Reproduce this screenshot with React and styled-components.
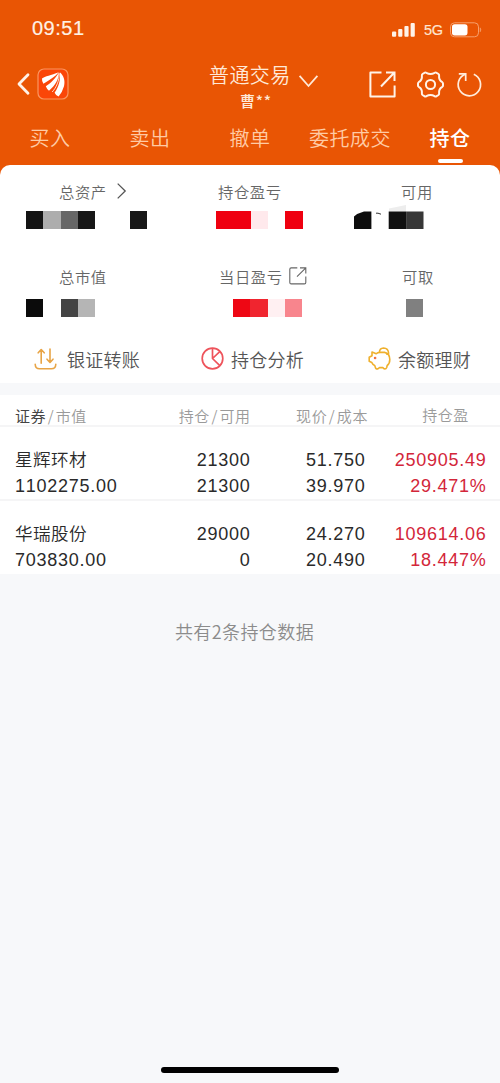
import React from 'react';
import styled, { createGlobalStyle } from 'styled-components';

const Global = createGlobalStyle`
  * { box-sizing: border-box; }
  body {
    margin: 0;
    background: #f7f8fa;
    font-family: "Liberation Sans", "Noto Sans CJK SC", sans-serif;
    font-kerning: none;
  }
  svg { display: block; flex: none; overflow: visible; }
`;

const Screen = styled.div`
  width: 500px;
  height: 1083px;
  display: flex;
  flex-direction: column;
  overflow: hidden;
  background: #f7f8fa;
`;

const Header = styled.header`
  height: 177px;
  flex: none;
  background: #e95504;
  color: #fff;
`;

const StatusBar = styled.div`
  height: 56px;
  padding: 0 18px 0 32px;
  display: flex;
  align-items: center;
  justify-content: space-between;
`;

const Clock = styled.span`
  font-size: 20px;
  line-height: 24px;
  letter-spacing: 0.5px;
  color: #fff1e4;
  -webkit-text-stroke: 0.2px #fff1e4;
`;

const StatusIcons = styled.div`
  display: flex;
  align-items: center;
  height: 24px;
  padding-top: 4px;
`;

const Network = styled.span`
  margin: 0 7px 0 9px;
  font-size: 14.5px;
  line-height: 18px;
  width: 19px;
  letter-spacing: -0.2px;
  color: #ffe5d0;
  -webkit-text-stroke: 0.2px #ffe5d0;
`;

const NavBar = styled.div`
  height: 60px;
  padding: 0 18px 0 17px;
  display: grid;
  grid-template-columns: 192px 1fr 113px;
`;

const NavLeft = styled.div`
  display: flex;
  align-items: center;
  gap: 7px;
  padding-bottom: 4px;
`;

const NavTitle = styled.div`
  padding-top: 5px;
`;

const TitleLine = styled.div`
  display: flex;
  align-items: center;
  gap: 8px;
  height: 26px;
  font-size: 20px;
  font-weight: 350;
  letter-spacing: 0.4px;
  white-space: nowrap;
  color: #ffe9d8;
  svg { margin-top: 13px; }
`;

const Account = styled.div`
  padding-left: 31px;
  font-size: 15px;
  line-height: 22px;
  font-weight: 500;
  letter-spacing: 0.8px;
  margin-top: 3px;
  color: #ffe9d8;
  font-family: "Noto Sans CJK SC", sans-serif;
`;

const NavActions = styled.div`
  display: flex;
  align-items: center;
  padding-bottom: 4px;
  svg:nth-child(2) { margin: 0 13px 0 21px; }
`;

const Tabs = styled.nav`
  display: grid;
  grid-template-columns: repeat(5, 100px);
  height: 49px;
`;

const Tab = styled.div`
  display: flex;
  flex-direction: column;
  align-items: center;
  padding-top: 8px;
  font-size: 20px;
  line-height: 30px;
  letter-spacing: 0.5px;
  white-space: nowrap;
  font-weight: ${(p) => (p.$active ? 500 : 350)};
  color: ${(p) => (p.$active ? '#fff' : '#ffcba5')};
  &::after {
    content: "";
    width: 25px;
    height: 4px;
    margin-top: 5px;
    border-radius: 2px;
    background: ${(p) => (p.$active ? '#fff' : 'transparent')};
  }
`;

const Card = styled.section`
  height: 218px;
  margin-top: -12px;
  flex: none;
  background: #fff;
  border-radius: 10px 10px 0 0;
`;

const Stats = styled.div`
  display: grid;
  grid-template-columns: 167px 167px 166px;
  grid-template-rows: 85px 87px;
`;

const Stat = styled.div`
  padding-top: 14px;
`;

const StatLabel = styled.div`
  display: flex;
  align-items: center;
  gap: ${(p) => p.$gap || 0}px;
  height: 24px;
  padding-left: ${(p) => p.$indent}px;
  font-size: 15.3px;
  font-weight: 350;
  letter-spacing: 0.6px;
  color: #666;
`;

const Mosaic = styled.div`
  display: flex;
  height: 17.5px;
  margin-top: ${(p) => p.$top}px;
  margin-left: ${(p) => p.$indent}px;
`;

const Block = styled.span`
  width: 17.33px;
  background: ${(p) => p.$tone || 'transparent'};
`;

const Shortcuts = styled.div`
  display: grid;
  grid-template-columns: 167px 167px 166px;
  height: 42px;
`;

const Shortcut = styled.div`
  display: flex;
  align-items: center;
  gap: ${(p) => p.$gap}px;
  height: 43px;
  padding-left: 34px;
  font-size: 18px;
  font-weight: 350;
  letter-spacing: 0.25px;
  color: #555;
`;

const Table = styled.section`
  margin-top: 12px;
  flex: none;
  background: #fff;
`;

const HeadRow = styled.div`
  display: grid;
  grid-template-columns: 135px 100.6px 117.4px 101px;
  height: 32px;
  padding: 7px 0 0 15px;
  border-bottom: 2px solid #f5f5f6;
  font-size: 15px;
  line-height: 28px;
  font-weight: 350;
  letter-spacing: 0.6px;
  color: #9a9a9a;
  white-space: nowrap;
  overflow: hidden;
`;

const HeadCell = styled.span`
  text-align: ${(p) => (p.$left ? 'left' : 'right')};
`;

const Strong = styled.span`
  color: #444;
  font-weight: 400;
`;

const Slash = styled.span`
  padding: 0 1.5px;
  font-family: "Noto Sans CJK SC", sans-serif;
`;

const HoldingRow = styled.div`
  display: grid;
  grid-template-columns: 135px 100.6px 115px 121px;
  height: ${(p) => p.$height}px;
  padding: 21px 0 0 15px;
  border-bottom: ${(p) => (p.$last ? 'none' : '2px solid #f5f5f6')};
`;

const Cell = styled.div`
  display: flex;
  flex-direction: column;
  align-items: ${(p) => (p.$left ? 'flex-start' : 'flex-end')};
  font-size: 18px;
  line-height: 25.5px;
  letter-spacing: 0.75px;
  white-space: nowrap;
  color: ${(p) => (p.$gain ? '#d3263a' : '#2a2a2a')};
`;

const StockName = styled.span`
  font-size: 17.6px;
  font-weight: 350;
  letter-spacing: 0.4px;
  height: 25.5px;
`;

const Summary = styled.p`
  margin: 43px 0 0;
  text-align: center;
  font-size: 18px;
  line-height: 28px;
  font-weight: 350;
  letter-spacing: 0.4px;
  font-family: "Noto Sans CJK SC", sans-serif;
  padding-right: 11px;
  color: #8b8b8b;
`;

const HomeIndicator = styled.div`
  width: 178px;
  height: 6px;
  margin: auto auto 10px 161px;
  border-radius: 3px;
  background: #000;
`;

const Signal = () => (
  <svg width="23" height="14" viewBox="0 0 23 14" fill="#fff3e8">
    <rect x="0" y="8.5" width="4.2" height="5.3" rx="1" />
    <rect x="6.2" y="6" width="4.2" height="7.8" rx="1" />
    <rect x="12.4" y="3" width="4.2" height="10.8" rx="1" />
    <rect x="18.6" y="0" width="4.2" height="13.8" rx="1" />
  </svg>
);

const Battery = () => (
  <svg width="32" height="16" viewBox="0 0 32 16">
    <rect x="0.5" y="0.8" width="28" height="14" rx="4" fill="none" stroke="#f7a06d" />
    <rect x="2" y="2.2" width="15.5" height="11.2" rx="2.6" fill="#fff" />
    <path d="M30.2 5.8q1.3 2 0 4z" fill="#f7a06d" stroke="#f7a06d" strokeWidth=".6" />
  </svg>
);

const Back = () => (
  <svg width="13" height="22" viewBox="0 0 13 22" fill="none" stroke="#fff3e8" strokeWidth="2.8" strokeLinecap="round" strokeLinejoin="round">
    <path d="M11 1.8 2 11l9 9.2" />
  </svg>
);

const Logo = () => (
  <svg width="32" height="32" viewBox="0 0 32 32">
    <rect x="1" y="1" width="30" height="30" rx="6" fill="#fa4608" stroke="#fb9660" strokeWidth="1.2" />
    <g fill="#fff">
      <path d="M5 10.5C8 8.2 14 7.2 21.8 4.2C18 8.8 12.5 11.8 6.4 15.7Q4.7 13.2 5 10.5Z" />
      <path d="M8.8 18.2C13.5 15.5 18.5 10.5 21.8 4.6C21.8 11.5 18.6 17.2 12 22.8Q9.8 21 8.8 18.2Z" />
      <path d="M22.8 4.2C26.6 7.5 28.4 12 27 18.2Q25.2 24.5 21.6 28.5Q18.6 27.4 17.6 24.8C21.8 18.5 23.8 12 22.8 4.2Z" />
    </g>
    <path d="M22.3 5.2C22.5 12.5 19 20 15.2 24" fill="none" stroke="#fff" strokeWidth=".8" />
  </svg>
);

const ChevronDown = () => (
  <svg width="19" height="12" viewBox="0 0 19 12" fill="none" stroke="#ffe9d8" strokeWidth="1.8">
    <path d="M.6.8 9.5 11 18.4.8" />
  </svg>
);

const ChevronRight = () => (
  <svg width="9" height="16" viewBox="0 0 9 16" fill="none" stroke="#555" strokeWidth="1.3">
    <path d="M.7.6 8.2 8 .7 15.4" />
  </svg>
);

const ShareBox = () => (
  <svg width="27" height="27" viewBox="0 0 27 27" fill="none" stroke="#fff3e8" strokeWidth="2">
    <path d="M12.5 1.5H1.4v24.1h24.2V14.5" strokeLinejoin="round" />
    <path d="M17 1.5h8.5V10M25.2 1.8 12 15.5" />
  </svg>
);

const Gear = () => (
  <svg width="27" height="27" viewBox="0 0 27 27" fill="none" stroke="#fff3e8" strokeWidth="2" strokeLinejoin="round">
    <path d="M7.4 1.8Q8.4 1.1 9.4 1.8Q13.5 4.4 17.6 1.8Q18.6 1.1 19.6 1.8L21.5 3Q22.3 3.6 22.1 4.7Q21.6 9.2 25.3 11.2Q26 11.7 26 12.6V14.4Q26 15.3 25.3 15.8Q21.6 17.8 22.1 22.3Q22.3 23.4 21.5 24L19.6 25.2Q18.6 25.9 17.6 25.2Q13.5 22.6 9.4 25.2Q8.4 25.9 7.4 25.2L5.5 24Q4.7 23.4 4.9 22.3Q5.4 17.8 1.7 15.8Q1 15.3 1 14.4V12.6Q1 11.7 1.7 11.2Q5.4 9.2 4.9 4.7Q4.7 3.6 5.5 3Z" />
    <circle cx="13.5" cy="13.5" r="4.6" />
  </svg>
);

const Refresh = () => (
  <svg width="25" height="25" viewBox="0 0 25 25" fill="none" stroke="#ffecdc" strokeWidth="1.7">
    <path d="M16.8 2.3A11.2 11.2 0 1 1 8.2 2.2" />
    <path d="M1.8 1.8H8.7V9" />
  </svg>
);

const SmallShare = () => (
  <svg width="18" height="18" viewBox="0 0 18 18" fill="none" stroke="#666" strokeWidth="1.1">
    <path d="M8.3.9H2.2Q.8.9.8 2.3v13.2q0 1.4 1.4 1.4h13.2q1.4 0 1.4-1.4V9.5M11 .9h5.8v5.5M16.6 1.1 8 9.6" />
  </svg>
);

const Transfer = () => (
  <svg width="23" height="22" viewBox="0 0 23 22" fill="none" stroke="#e8a445" strokeWidth="1.6" strokeLinecap="round" strokeLinejoin="round">
    <path d="M1.2 16.2Q1.4 20.8 5.5 20.8H17.5Q21.6 20.8 21.8 16.2" />
    <path d="M7.2 15.2V1.7M4.2 4.8 7.2 1.5l3 3.3M16 1v13.2M13 11.2l3 3.3 3-3.3" />
  </svg>
);

const Pie = () => (
  <svg width="23" height="23" viewBox="0 0 23 23" fill="none" stroke="#ee535b" strokeWidth="1.7">
    <circle cx="11.5" cy="11.5" r="10.3" />
    <path d="M11.5 1.2v10.3l7.6 7.3M11.5 11.5l7.5-7.2" strokeLinejoin="round" />
  </svg>
);

const Piggy = () => (
  <svg width="23" height="23" viewBox="0 0 23 23" fill="none" stroke="#efb02d" strokeWidth="1.6" strokeLinejoin="round" strokeLinecap="round">
    <path d="M4 5.1 8.2 6.8Q9.5 5.4 12 5.4H16.5Q21.8 6.5 21.8 12.5Q21.8 16.5 19.2 18.5L18.7 20.5Q18 22.3 16.2 21.8L14.8 20.6H11.5L9.8 21.9Q7.8 22.4 7.4 20.5L6.7 18.4Q4.6 17.6 3.8 15.4L1.2 14.2V10.3L4 8.8Z" />
    <path d="M11.4 5.2Q11.6 1.2 15.5 1Q20.3 1.1 20.6 6.2Q20.2 7.8 18.8 7.1" />
    <circle cx="7.1" cy="11" r=".5" stroke="#f06b35" />
  </svg>
);

const AvailableMosaic = () => (
  <svg width="70" height="24" viewBox="0 0 70 24">
    <path d="M0 11.5Q4 8 10 6.5H17.4V24H0Z" fill="#0d0d0d" />
    <path d="M22 8.2h2l3 1" stroke="#333" fill="none" />
    <path d="M35 6.5V3.4L52 0V6.5Z" fill="#ededed" />
    <rect x="34.7" y="6.5" width="17.4" height="17.5" fill="#101010" />
    <rect x="52.1" y="6.5" width="17.4" height="17.5" fill="#373737" />
  </svg>
);

const AvailableSlot = styled.div`
  margin: 1.5px 0 0 20px;
`;

const Blocks = ({ tones, indent, top }) => (
  <Mosaic $indent={indent} $top={top}>
    {tones.map((tone, i) => (
      <Block key={i} $tone={tone} />
    ))}
  </Mosaic>
);

const tabs = ['买入', '卖出', '撤单', '委托成交', '持仓'];

const holdings = [
  { name: '星辉环材', value: '1102275.00', held: '21300', usable: '21300', price: '51.750', cost: '39.970', gain: '250905.49', rate: '29.471%', height: 74 },
  { name: '华瑞股份', value: '703830.00', held: '29000', usable: '0', price: '24.270', cost: '20.490', gain: '109614.06', rate: '18.447%', height: 73 },
];

export default function App() {
  return (
    <Screen>
      <Global />
      <Header>
        <StatusBar>
          <Clock>09:51</Clock>
          <StatusIcons>
            <Signal />
            <Network>5G</Network>
            <Battery />
          </StatusIcons>
        </StatusBar>
        <NavBar>
          <NavLeft>
            <Back />
            <Logo />
          </NavLeft>
          <NavTitle>
            <TitleLine>
              普通交易
              <ChevronDown />
            </TitleLine>
            <Account>曹**</Account>
          </NavTitle>
          <NavActions>
            <ShareBox />
            <Gear />
            <Refresh />
          </NavActions>
        </NavBar>
        <Tabs>
          {tabs.map((t) => (
            <Tab key={t} $active={t === '持仓'}>{t}</Tab>
          ))}
        </Tabs>
      </Header>
      <Card>
        <Stats>
          <Stat>
            <StatLabel $indent={59} $gap={10}>总资产<ChevronRight /></StatLabel>
            <Blocks indent={26} top={8} tones={['#141414', '#adadad', '#666', '#171717', '', '', '#181818']} />
          </Stat>
          <Stat>
            <StatLabel $indent={51}>持仓盈亏</StatLabel>
            <Blocks indent={49} top={8} tones={['#ef0010', '#ef0010', '#ffe9ec', '', '#ef0010']} />
          </Stat>
          <Stat>
            <StatLabel $indent={67}>可用</StatLabel>
            <AvailableSlot><AvailableMosaic /></AvailableSlot>
          </Stat>
          <Stat>
            <StatLabel $indent={59}>总市值</StatLabel>
            <Blocks indent={26} top={11} tones={['#0b0b0b', '', '#444', '#b5b5b5']} />
          </Stat>
          <Stat>
            <StatLabel $indent={52} $gap={6}>当日盈亏<SmallShare /></StatLabel>
            <Blocks indent={66} top={11} tones={['#ee0714', '#f0252f', '#fff0f2', '#f8858d']} />
          </Stat>
          <Stat>
            <StatLabel $indent={68}>可取</StatLabel>
            <Blocks indent={72} top={11} tones={['#808080']} />
          </Stat>
        </Stats>
        <Shortcuts>
          <Shortcut $gap={10}><Transfer />银证转账</Shortcut>
          <Shortcut $gap={7}><Pie />持仓分析</Shortcut>
          <Shortcut $gap={7}><Piggy />余额理财</Shortcut>
        </Shortcuts>
      </Card>
      <Table>
        <HeadRow>
          <HeadCell $left><Strong>证券</Strong><Slash>/</Slash>市值</HeadCell>
          <HeadCell>持仓<Slash>/</Slash>可用</HeadCell>
          <HeadCell>现价<Slash>/</Slash>成本</HeadCell>
          <HeadCell>持仓盈</HeadCell>
        </HeadRow>
        {holdings.map((h, i) => (
          <HoldingRow key={h.name} $height={h.height} $last={i === holdings.length - 1}>
            <Cell $left><StockName>{h.name}</StockName><span>{h.value}</span></Cell>
            <Cell><span>{h.held}</span><span>{h.usable}</span></Cell>
            <Cell><span>{h.price}</span><span>{h.cost}</span></Cell>
            <Cell $gain><span>{h.gain}</span><span>{h.rate}</span></Cell>
          </HoldingRow>
        ))}
      </Table>
      <Summary>共有2条持仓数据</Summary>
      <HomeIndicator />
    </Screen>
  );
}
